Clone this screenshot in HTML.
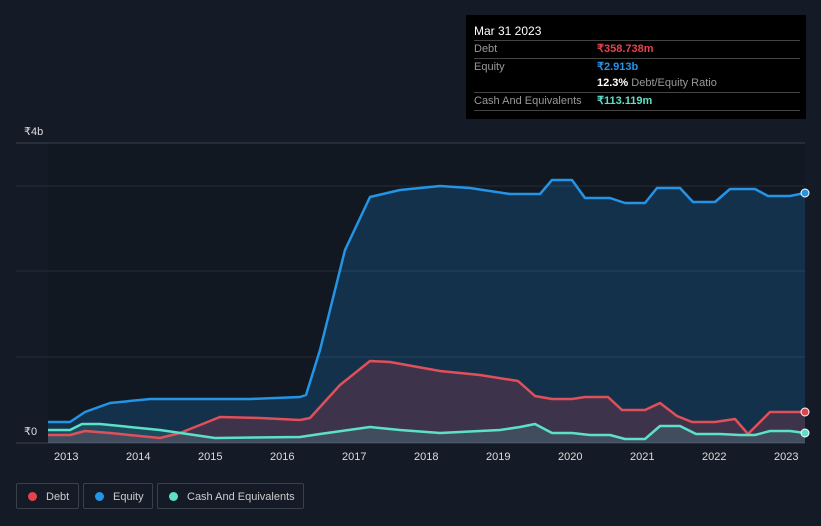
<!DOCTYPE html>
<html><head><meta charset="utf-8"><style>
body{margin:0;width:821px;height:526px;background:#151b26;font-family:"Liberation Sans",sans-serif;overflow:hidden;position:relative}
.tt{position:absolute;left:466px;top:15px;width:340px;height:104px;background:#000;color:#fff;font-size:11px}
.tt .r{position:absolute;left:8px;right:6px;border-top:1px solid #444;height:17px;line-height:17px;color:#999}
.leg{position:absolute;top:483px;height:26px;border:1px solid #3a404a;border-radius:2px;color:#ccc;font-size:11px;line-height:26px;box-sizing:border-box}
.leg i{display:inline-block;width:9px;height:9px;border-radius:50%;margin:0 9px 0 11px;vertical-align:-1px}
</style></head><body>
<svg width="821" height="526" style="position:absolute;left:0;top:0">
<rect x="48" y="143" width="757" height="300" fill="#111821"/>
<line x1="16" y1="143" x2="805" y2="143" stroke="#3a404a"/>
<line x1="16" y1="186" x2="805" y2="186" stroke="#262d38"/>
<line x1="16" y1="271" x2="805" y2="271" stroke="#262d38"/>
<line x1="16" y1="357" x2="805" y2="357" stroke="#262d38"/>
<line x1="16" y1="443" x2="805" y2="443" stroke="#3a404a"/>
<g font-size="11" fill="#ddd">
<text x="24" y="135">₹4b</text><text x="24" y="435">₹0</text>
<text x="54" y="460">2013</text><text x="126" y="460">2014</text><text x="198" y="460">2015</text><text x="270" y="460">2016</text><text x="342" y="460">2017</text><text x="414" y="460">2018</text><text x="486" y="460">2019</text><text x="558" y="460">2020</text><text x="630" y="460">2021</text><text x="702" y="460">2022</text><text x="774" y="460">2023</text>
</g>
<path d="M48,443 L48,422 70,422 85,412 110,403 150,399 200,399 250,399 300,397 306,395 320,350 345,250 370,197 400,190 440,186 470,188 510,194 540,194 552,180 572,180 585,198 610,198 625,203 645,203 657,188 680,188 693,202 715,202 730,189 755,189 768,196 790,196 805,193 805,443Z" fill="#1f8ee4" fill-opacity="0.22"/>
<path d="M48,443 L48,435 70,435 85,431 110,433 160,438 180,433 220,417 260,418 300,420 310,418 340,385 370,361 390,362 440,371 480,375 518,381 535,396 552,399 572,399 585,397 608,397 622,410 645,410 660,403 677,416 692,422 715,422 735,419 748,434 770,412 805,412 805,443Z" fill="#e0434e" fill-opacity="0.2"/>
<path d="M48,443 L48,430 70,430 82,424 100,424 160,430 215,438 300,437 320,434 370,427 400,430 440,433 500,430 520,427 535,424 552,433 572,433 590,435 610,435 625,439 645,439 660,426 680,426 696,434 720,434 740,435 755,435 770,431 790,431 805,433 805,443Z" fill="#5de0c8" fill-opacity="0.15"/>
<g fill="none" stroke-width="2.5" stroke-linejoin="round">
<polyline stroke="#2394e6" points="48,422 70,422 85,412 110,403 150,399 200,399 250,399 300,397 306,395 320,350 345,250 370,197 400,190 440,186 470,188 510,194 540,194 552,180 572,180 585,198 610,198 625,203 645,203 657,188 680,188 693,202 715,202 730,189 755,189 768,196 790,196 805,193"/>
<polyline stroke="#e0505a" points="48,435 70,435 85,431 110,433 160,438 180,433 220,417 260,418 300,420 310,418 340,385 370,361 390,362 440,371 480,375 518,381 535,396 552,399 572,399 585,397 608,397 622,410 645,410 660,403 677,416 692,422 715,422 735,419 748,434 770,412 805,412"/>
<polyline stroke="#5de0c8" points="48,430 70,430 82,424 100,424 160,430 215,438 300,437 320,434 370,427 400,430 440,433 500,430 520,427 535,424 552,433 572,433 590,435 610,435 625,439 645,439 660,426 680,426 696,434 720,434 740,435 755,435 770,431 790,431 805,433"/>
</g>
<circle cx="805" cy="193" r="4" fill="#2394e6" stroke="#fff" stroke-width="1"/>
<circle cx="805" cy="412" r="4" fill="#e0434e" stroke="#fff" stroke-width="1"/>
<circle cx="805" cy="433" r="4" fill="#5de0c8" stroke="#fff" stroke-width="1"/>
</svg>
<div class="tt">
<div style="position:absolute;left:8px;top:9px;font-size:12px">Mar 31 2023</div>
<div class="r" style="top:25px">Debt<span style="position:absolute;left:123px;color:#e5434c;font-weight:bold">₹358.738m</span></div>
<div class="r" style="top:43px">Equity<span style="position:absolute;left:123px;color:#2394e6;font-weight:bold">₹2.913b</span></div>
<div class="r" style="top:60px;border:0"><span style="position:absolute;left:123px"><b style="color:#fff">12.3%</b> Debt/Equity Ratio</span></div>
<div class="r" style="top:77px">Cash And Equivalents<span style="position:absolute;left:123px;color:#5de0c8;font-weight:bold">₹113.119m</span></div>
<div style="position:absolute;left:8px;right:6px;top:95px;border-top:1px solid #444"></div>
</div>
<div class="leg" style="left:16px;width:63px"><i style="background:#e5434c"></i>Debt</div>
<div class="leg" style="left:83px;width:70px"><i style="background:#2394e6"></i>Equity</div>
<div class="leg" style="left:157px;width:147px"><i style="background:#5de0c8"></i>Cash And Equivalents</div>
</body></html>
